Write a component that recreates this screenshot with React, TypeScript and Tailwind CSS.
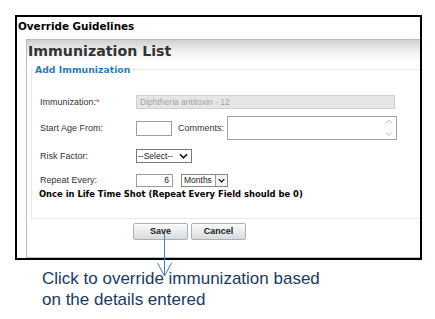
import { ReactNode } from 'react';

const sans = { fontFamily: '"Liberation Sans", Arial, sans-serif' };
const verdana = { fontFamily: '"DejaVu Sans", Verdana, sans-serif' };

function Chevron({ className = '' }: { className?: string }) {
  return (
    <svg viewBox="0 0 10 6" className={className} fill="none">
      <path d="M1 1 L5 5 L9 1" stroke="currentColor" strokeWidth="1.6" />
    </svg>
  );
}

function Row({ label, required, className = '', children }: { label: string; required?: boolean; className?: string; children?: ReactNode }) {
  return (
    <div className={`flex items-center ${className}`}>
      <div className="w-[96px] shrink-0 text-[9px] leading-[11px] text-[#333]">
        {label}
        {required && <span className="text-[#e0322f]">*</span>}
      </div>
      {children}
    </div>
  );
}

function Button({ children }: { children: ReactNode }) {
  return (
    <button className="w-[55px] h-[17px] border border-[#a9b0b6] rounded-[2px] bg-gradient-to-b from-[#fafafa] to-[#d8dbde] text-[9px] font-bold text-[#222] leading-none shadow-[inset_0_1px_0_#fff]">
      {children}
    </button>
  );
}

export default function App() {
  return (
    <div className="relative w-[435px] h-[319px] bg-white overflow-hidden" style={sans}>
      {/* dialog frame */}
      <div className="ml-[15px] mt-[15px] w-[407px] h-[245px] border-2 border-black flex flex-col overflow-hidden">
        <div className="h-[22px] pl-[1px] pt-[3px] text-[10.4px] leading-[12px] font-bold text-black" style={verdana}>
          Override Guidelines
        </div>

        <div className="ml-[9px] flex-1 flex flex-col border-l border-t border-b border-[#afc1cc]">
          <div className="h-[23px] pl-[1px] pt-[3px] bg-gradient-to-b from-[#cdd0d2] via-[#f0f0f0] to-white text-[14.2px] leading-[17px] font-bold text-[#333]" style={verdana}>
            Immunization List
          </div>

          <fieldset className="ml-[4px] border border-r-0 border-[#e6e6e6] pl-[8px] pb-[18px]">
            <legend className="-ml-[7px] px-[2px] h-[13px] pt-[1px] text-[9.3px] leading-[12px] font-bold text-[#2d7bb5]" style={verdana}>
              Add Immunization
            </legend>

            <Row label="Immunization:" required className="mt-[19px] h-[14px]">
              <div className="w-[259px] h-[14px] border border-[#cfcfcf] bg-[#e6e6e6] pl-[3px] text-[8.5px] leading-[12px] text-[#a3a3a3]">
                Diphtheria antitoxin - 12
              </div>
            </Row>

            <Row label="Start Age From:" className="mt-[7px] h-[24px]">
              <div className="w-[36px] h-[15px] border border-[#9c9c9c] bg-white" />
              <div className="ml-[6px] w-[49px] text-[9px] leading-[11px] text-[#333]">Comments:</div>
              <div className="relative w-[170px] h-[24px] border border-[#a3a3a3] bg-white">
                <svg viewBox="0 0 10 24" className="absolute right-[2px] top-[1px] w-[10px] h-[21px] text-[#b0b0b0]" fill="none">
                  <path d="M1.5 6 L5 2.5 L8.5 6" stroke="currentColor" strokeWidth="1" />
                  <path d="M1.5 16.5 L5 20 L8.5 16.5" stroke="currentColor" strokeWidth="1" />
                </svg>
              </div>
            </Row>

            <Row label="Risk Factor:" className="mt-[9px] h-[14px]">
              <div className="w-[56px] h-[14px] border border-[#7a7a7a] bg-white flex items-center pl-[1px] pr-[3px] text-[8.5px] leading-[12px] text-[#222]">
                <span className="flex-1">--Select--</span>
                <Chevron className="w-[9px] h-[6px] text-black" />
              </div>
            </Row>

            <Row label="Repeat Every:" className="mt-[11px] h-[13px]">
              <div className="w-[37px] h-[13px] border border-[#9c9c9c] bg-white pr-[3px] text-right text-[8.5px] leading-[11px] text-[#222]">
                6
              </div>
              <div className="ml-[8px] w-[47px] h-[13px] border border-[#8a8a8a] bg-white flex items-center pl-[2px] text-[8.5px] leading-[11px] text-[#222]">
                <span className="flex-1">Months</span>
                <div className="w-[12px] h-[11px] border-l border-[#9a9a9a] flex items-center justify-center bg-[#f4f4f4]">
                  <Chevron className="w-[7px] h-[5px] text-black" />
                </div>
              </div>
            </Row>

            <div className="mt-[2px] -ml-[1px] h-[11px] text-[8.4px] leading-[11px] font-bold text-black" style={verdana}>
              Once in Life Time Shot (Repeat Every Field should be 0)
            </div>
          </fieldset>

          <div className="mt-[4px] ml-[106px] flex gap-[3px]">
            <Button>Save</Button>
            <Button>Cancel</Button>
          </div>
        </div>
      </div>

      <div className="mt-[8px] pl-[42px] text-[17px] leading-[21px] text-[#203864]">
        <div>Click to override immunization based</div>
        <div>on the details entered</div>
      </div>

      {/* callout arrow */}
      <svg className="absolute left-0 top-0 w-[435px] h-[319px] pointer-events-none" fill="none">
        <path d="M164.5 233 L164.5 276" stroke="#4a7ebb" strokeWidth="1" />
        <path d="M157.5 263 L164.5 276 L171.5 263" stroke="#4a7ebb" strokeWidth="1" />
      </svg>
    </div>
  );
}
